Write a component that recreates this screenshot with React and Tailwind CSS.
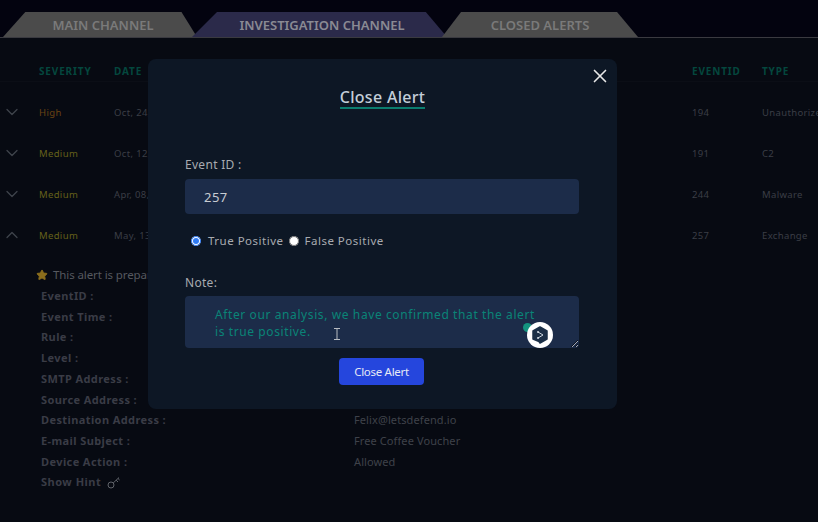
import React from "react";
import { ChevronDown, ChevronUp, X, Star } from "lucide-react";

const rows = [
  { severity: "High", color: "text-[#6b4312]", date: "Oct, 24, 2022, 09:22 PM", id: "194", type: "Unauthorized Access", open: false },
  { severity: "Medium", color: "text-[#65611a]", date: "Oct, 12, 2022, 11:05 AM", id: "191", type: "C2", open: false },
  { severity: "Medium", color: "text-[#65611a]", date: "Apr, 08, 2022, 04:12 PM", id: "244", type: "Malware", open: false },
  { severity: "Medium", color: "text-[#65611a]", date: "May, 13, 2022, 02:32 PM", id: "257", type: "Exchange", open: true },
];

const details = [
  { label: "EventID :", value: "257" },
  { label: "Event Time :", value: "May, 13, 2022, 02:32 PM" },
  { label: "Rule :", value: "SOC326" },
  { label: "Level :", value: "Security Analyst" },
  { label: "SMTP Address :", value: "" },
  { label: "Source Address :", value: "" },
  { label: "Destination Address :", value: "Felix@letsdefend.io" },
  { label: "E-mail Subject :", value: "Free Coffee Voucher" },
  { label: "Device Action :", value: "Allowed" },
];

const Tab = ({ label, width, fill, points, className = "", text = "text-[#7a7a7a]" }) => (
  <div className={`relative flex h-[25px] shrink-0 items-center justify-center pt-[2px] ${width} ${className}`}>
    <svg className="absolute inset-0 h-full w-full" viewBox="0 0 100 25" preserveAspectRatio="none">
      <polygon points={points} fill={fill} />
    </svg>
    <span className={`relative text-[13px] font-semibold ${text}`}>{label}</span>
  </div>
);

const App = () => {
  return (
    <div className="relative h-[522px] w-[818px] overflow-hidden bg-[#070a12] font-['Noto_Sans',sans-serif]">
      <div className="flex h-[38px] items-end border-b border-[#3a3a40] bg-[#03030f] pl-[3px]">
        <Tab label="MAIN CHANNEL" width="w-[194px]" fill="#4b4b4b" points="0,25 11.5,0 92,0 100,25" className="pl-[6px]" />
        <Tab label="INVESTIGATION CHANNEL" width="w-[255px]" fill="#2b2a4a" points="0,25 9.8,0 91.7,0 100,25" className="-ml-[5px] pl-[5px]" text="text-[#8a8a94]" />
        <Tab label="CLOSED ALERTS" width="w-[196px]" fill="#4b4b4b" points="0,25 9.7,0 89.3,0 100,25" className="-ml-[5px]" />
      </div>

      <div className="flex h-[44px] items-end border-b border-[#0b0e16] text-[10px] font-bold leading-[20px] tracking-[0.85px] text-[#04473e]">
        <div className="w-[39px] shrink-0" />
        <div className="w-[75px] shrink-0">SEVERITY</div>
        <div className="w-[578px] shrink-0">DATE</div>
        <div className="w-[70px] shrink-0">EVENTID</div>
        <div>TYPE</div>
      </div>

      <div className="pb-[-1px] pt-[11px]">
        {rows.map((row) => (
          <div key={row.id} className="flex h-[41px] items-center text-[9.5px] tracking-[0.35px] text-[#3b3e46]">
            <div className="-mt-[3px] w-[39px] shrink-0 pl-[1.5px]">
              {row.open ? (
                <ChevronUp size={20} strokeWidth={1.5} className="text-[#3f444c]" />
              ) : (
                <ChevronDown size={20} strokeWidth={1.5} className="text-[#3f444c]" />
              )}
            </div>
            <div className={`w-[75px] shrink-0 ${row.color}`}>{row.severity}</div>
            <div className="w-[578px] shrink-0">{row.date}</div>
            <div className="w-[70px] shrink-0">{row.id}</div>
            <div className="shrink-0 whitespace-nowrap">{row.type}</div>
          </div>
        ))}
      </div>

      <div className="mt-[8px] pl-[36px]">
        <div className="flex h-[20px] items-center gap-[5px] text-[11.5px] tracking-[-0.1px] text-[#55585f]">
          <Star size={12} fill="#8a6d1c" stroke="#8a6d1c" />
          <span>This alert is prepared for analysis</span>
        </div>
        <div className="pl-[5px] pt-[1px] text-[11px]">
          {details.map((d) => (
            <div key={d.label} className="flex h-[20.7px] items-center">
              <div className="w-[313px] shrink-0 font-bold tracking-[0.4px] text-[#3a3c46]">{d.label}</div>
              <div className="tracking-[0.1px] text-[#3f424a]">{d.value}</div>
            </div>
          ))}
          <div className="flex h-[20.7px] items-center gap-[6px] font-bold tracking-[0.5px] text-[#3a3c46]">
            Show Hint
            <svg className="h-[13px] w-[13px] text-[#6a6d74]" viewBox="0 0 13 13" fill="none" stroke="currentColor" strokeWidth="0.9">
              <circle cx="4" cy="9" r="3" />
              <path d="M6.2 7 12 1.5M9.2 4.2 11 6M11 2.5 12.6 4" />
            </svg>
          </div>
        </div>
      </div>

      <div className="absolute inset-0 pl-[148px] pt-[59px]">
        <div className="relative h-[350px] w-[469px] rounded-lg bg-[#0d1725] px-[37px]">
          <button className="absolute right-[6px] top-[6px] text-[#e8e8e8]">
            <X size={22} strokeWidth={1.8} />
          </button>
          <div className="flex justify-center pt-[29px]">
            <h2 className="border-b-2 border-[#0b7d6f] text-[16px] font-medium leading-[19px] tracking-[0.3px] text-[#c3ced9]">Close Alert</h2>
          </div>

          <div className="mt-[47px] text-[12px] leading-[18px] tracking-[0.3px] text-[#a8abb0]">Event ID :</div>
          <input
            readOnly
            value="257"
            className="mt-[5px] block h-[35px] w-[394px] rounded bg-[#1c2c49] pl-[19px] text-[13px] tracking-[0.5px] text-[#c8ccd2] outline-none"
          />

          <div className="mt-[17px] flex h-[20px] items-center pl-[6px] text-[11.5px] tracking-[0.5px] text-[#a8abb0]">
            <input type="radio" checked readOnly className="m-0 h-[10px] w-[10px] accent-[#2f7bf5]" />
            <span className="ml-[7px]">True Positive</span>
            <input type="radio" checked={false} readOnly className="m-0 ml-[5px] h-[10px] w-[10px]" />
            <span className="ml-[6px]">False Positive</span>
          </div>

          <div className="mt-[23px] text-[12px] leading-[18px] tracking-[0.3px] text-[#a8abb0]">Note:</div>
          <div className="relative mt-[4px]">
            <textarea
              readOnly
              value="After our analysis, we have confirmed that the alert is true positive."
              className="block h-[52px] w-[394px] rounded bg-[#1c2c49] pl-[30px] pr-[36px] pt-[10px] text-[12px] leading-[17px] tracking-[0.6px] text-[#0a8477] outline-none"
            />
            <svg className="absolute left-[338px] top-[27px] h-[9px] w-[9px]" viewBox="0 0 9 9">
              <circle cx="4.5" cy="4.5" r="4.5" fill="#14937f" />
            </svg>
            <svg className="absolute left-[342px] top-[26px] h-[26px] w-[26px]" viewBox="0 0 26 26">
              <circle cx="13" cy="13" r="13" fill="#fff" />
              <path d="M13 5 20 9V17L13 21 12 19.5 6 17V9Z" fill="#1b2f47" stroke="#1b2f47" strokeWidth="1.5" strokeLinejoin="round" />
              <path d="M11 10 16 13 11 16" fill="none" stroke="#dfe6ee" strokeWidth="0.9" />
              <circle cx="11" cy="10" r="0.9" fill="#dfe6ee" />
              <circle cx="11" cy="16" r="0.9" fill="#dfe6ee" />
            </svg>
            <svg className="absolute left-[148px] top-[32px] h-[12px] w-[8px]" viewBox="0 0 8 12">
              <path d="M1 .5H7M1 11.5H7M4 .5V11.5" fill="none" stroke="#b8bcc2" strokeWidth="1" />
            </svg>
          </div>

          <div className="-ml-[2px] mt-[10px] flex justify-center">
            <button className="h-[27px] w-[85px] rounded bg-[#2546dd] text-[11.5px] tracking-[-0.3px] text-[#e6e9f5]">Close Alert</button>
          </div>
        </div>
      </div>
    </div>
  );
};

export default App;
